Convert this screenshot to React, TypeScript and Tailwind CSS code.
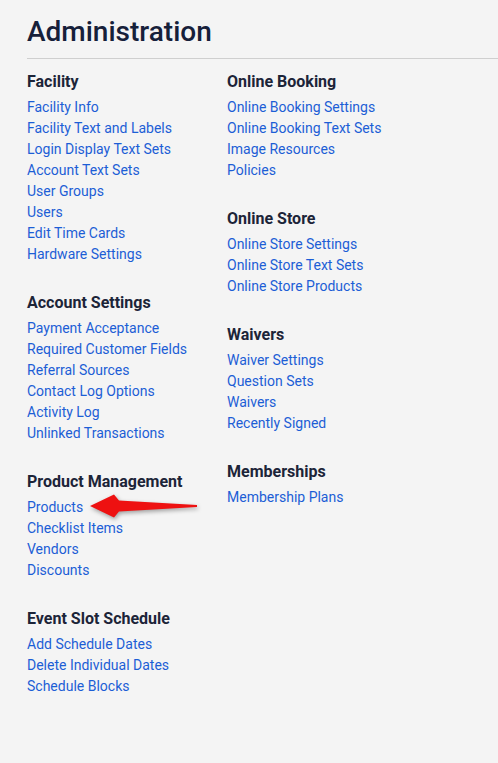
const left = [
  {
    title: "Facility",
    links: [
      "Facility Info",
      "Facility Text and Labels",
      "Login Display Text Sets",
      "Account Text Sets",
      "User Groups",
      "Users",
      "Edit Time Cards",
      "Hardware Settings",
    ],
  },
  {
    title: "Account Settings",
    links: [
      "Payment Acceptance",
      "Required Customer Fields",
      "Referral Sources",
      "Contact Log Options",
      "Activity Log",
      "Unlinked Transactions",
    ],
  },
  {
    title: "Product Management",
    links: ["Products", "Checklist Items", "Vendors", "Discounts"],
  },
  {
    title: "Event Slot Schedule",
    links: ["Add Schedule Dates", "Delete Individual Dates", "Schedule Blocks"],
  },
];

const right = [
  {
    title: "Online Booking",
    links: [
      "Online Booking Settings",
      "Online Booking Text Sets",
      "Image Resources",
      "Policies",
    ],
  },
  {
    title: "Online Store",
    links: [
      "Online Store Settings",
      "Online Store Text Sets",
      "Online Store Products",
    ],
  },
  {
    title: "Waivers",
    links: ["Waiver Settings", "Question Sets", "Waivers", "Recently Signed"],
  },
  {
    title: "Memberships",
    links: ["Membership Plans"],
  },
];

type Section = { title: string; links: string[] };

const Column = ({ sections }: { sections: Section[] }) => (
  <div className="w-[200px] flex flex-col">
    {sections.map((s) => (
      <div key={s.title} className="mb-[26px]">
        <h3 className="text-[16px] leading-[24px] font-bold text-[#1c2438] mb-[3px]">
          {s.title}
        </h3>
        <ul>
          {s.links.map((l) => (
            <li key={l} className="text-[14px] leading-[21px]">
              <a href="#" className="text-[#1c5ed6]">
                {l}
              </a>
            </li>
          ))}
        </ul>
      </div>
    ))}
  </div>
);

export default function App() {
  return (
    <div
      className="relative min-h-[763px] w-full bg-[#f4f4f4] pl-[27px]"
      style={{ fontFamily: "Roboto, 'Liberation Sans', sans-serif" }}
    >
      <h1 className="pt-[14px] text-[28px] leading-[36px] font-medium text-[#16203a]">
        Administration
      </h1>
      <div className="mt-[8px] h-px bg-[#cfcfcf]" />
      <div className="flex pt-[11px]">
        <Column sections={left} />
        <Column sections={right} />
      </div>
      {/* red arrow pointing at Products */}
      <svg
        className="absolute left-[86px] top-[490px]"
        width="116"
        height="32"
        viewBox="0 0 116 32"
        style={{ filter: "drop-shadow(1px 2px 2px rgba(0,0,0,0.35))" }}
      >
        <path
          d="M4 16 L28 4.5 L33 10.5 L111 15 L111 17 L33 21.5 L28 27.5 Z"
          fill="#ee1111"
        />
      </svg>
    </div>
  );
}
